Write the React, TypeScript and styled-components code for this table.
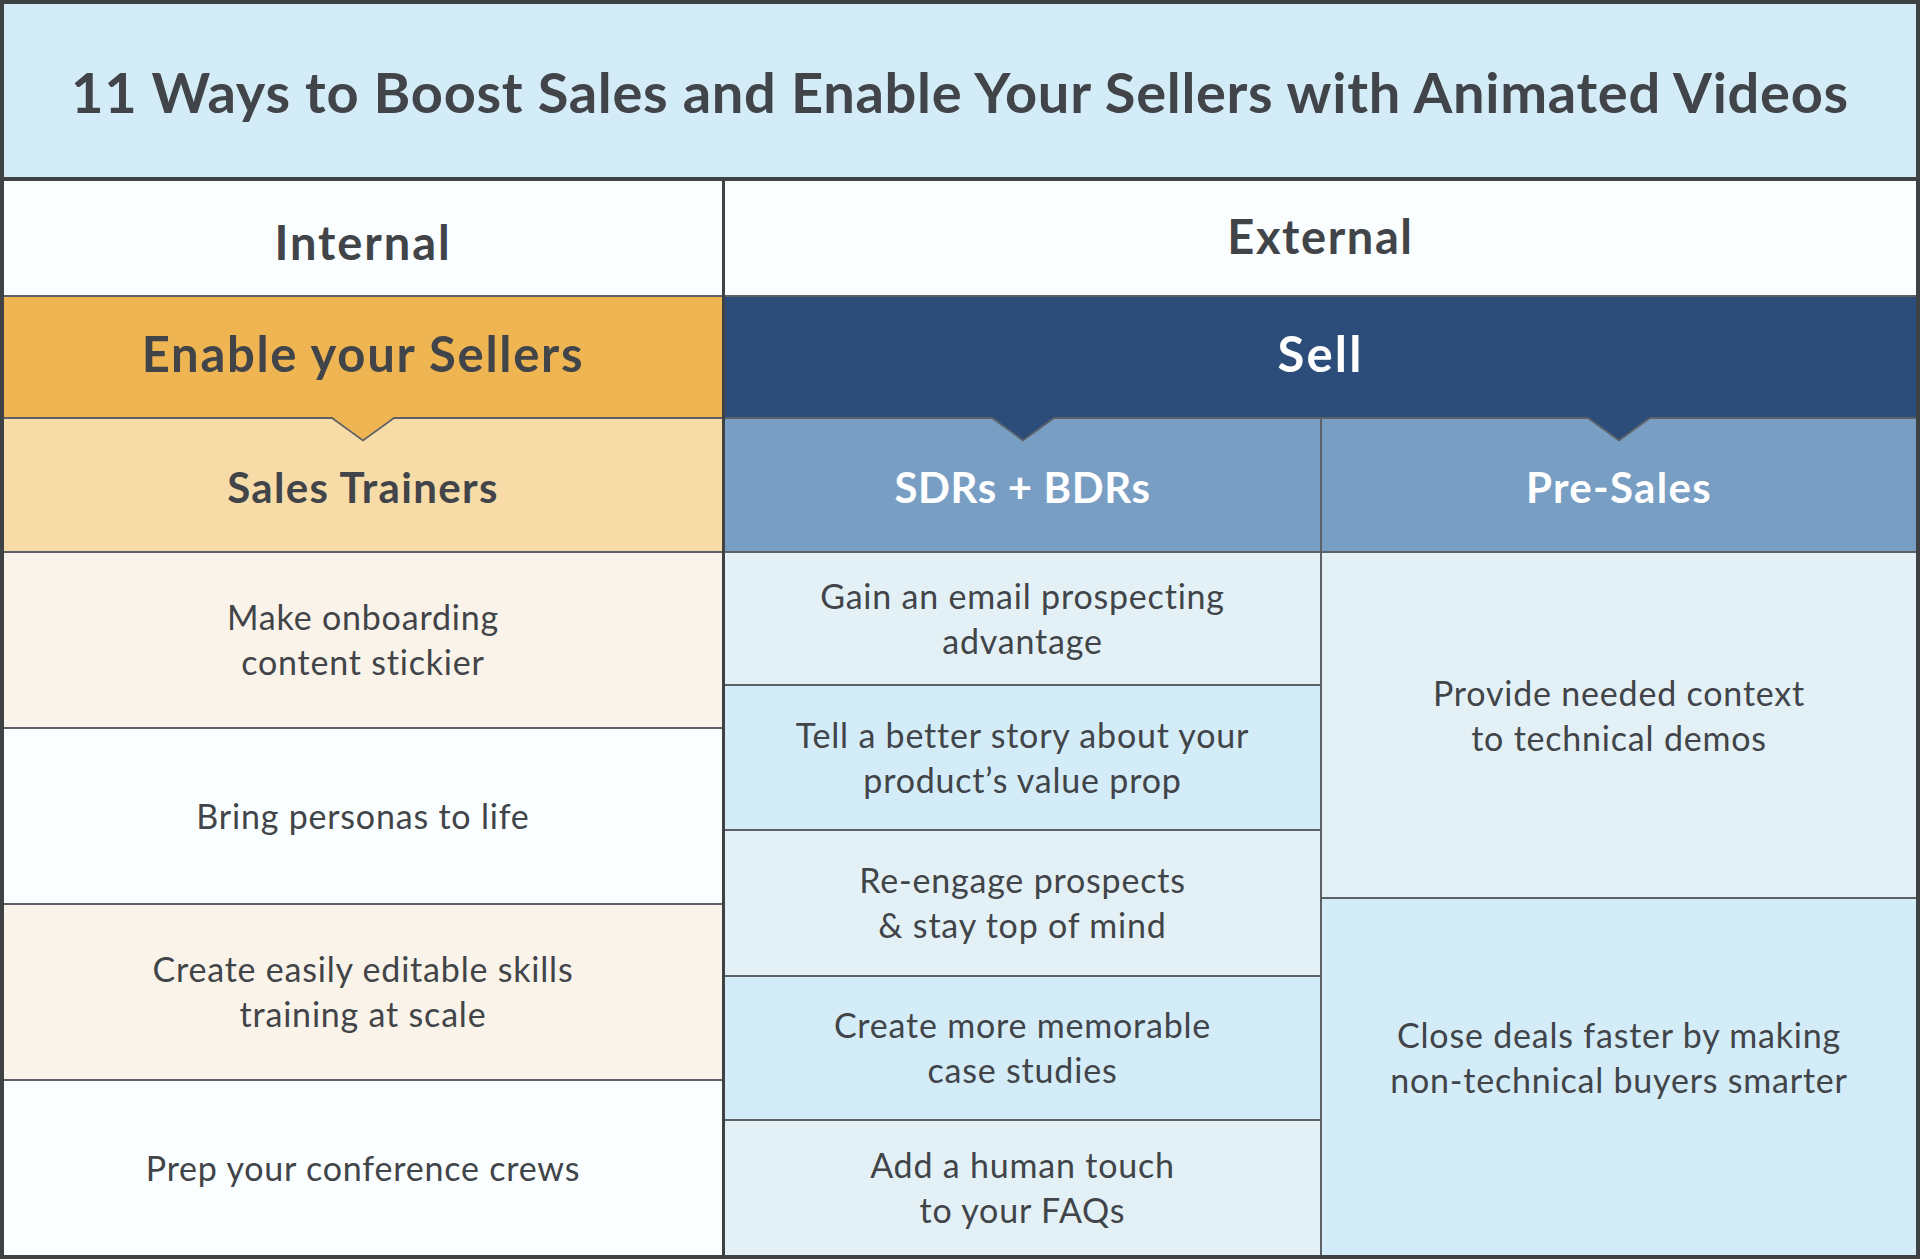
import React from "react";
import styled, { createGlobalStyle } from "styled-components";

const Global = createGlobalStyle`
  html, body { margin: 0; padding: 0; background: #ffffff; }
  body { font-family: Lato, "Open Sans", sans-serif; color: #414448; }
  *, *::before, *::after { box-sizing: border-box; }
`;

const INK = "#414448";
const LINE = "#5d6165";
const FRAME = "#3e4245";

const Frame = styled.div`
  width: 1920px;
  height: 1259px;
  border: 4px solid ${FRAME};
  display: flex;
  flex-direction: column;
  background: #fbfeff;
  overflow: hidden;
`;

const TitleBar = styled.header`
  height: 177px;
  flex: none;
  background: #d3ecf7;
  border-bottom: 4px solid ${FRAME};
  display: flex;
  align-items: center;
  justify-content: center;
  padding-top: 1px;
`;

const Title = styled.h1`
  margin: 0;
  font-size: 56px;
  font-weight: 700;
  color: ${INK};
  letter-spacing: 0.7px;
  white-space: nowrap;
`;

const Body = styled.div`
  flex: 1;
  display: flex;
  min-height: 0;
`;

const Column = styled.section<{ $w?: number; $divider?: number }>`
  display: flex;
  flex-direction: column;
  ${(p) => (p.$w ? `width: ${p.$w}px; flex: none;` : "flex: 1; min-width: 0;")}
  ${(p) => (p.$divider ? `border-right: ${p.$divider}px solid ${p.$divider > 2 ? FRAME : LINE};` : "")}
`;

const SubGrid = styled.div`
  flex: 1;
  display: flex;
  min-height: 0;
`;

const Cell = styled.div<{ $h?: number; $bg: string; $line?: boolean; $pb?: number }>`
  position: relative;
  display: flex;
  align-items: center;
  justify-content: center;
  text-align: center;
  background: ${(p) => p.$bg};
  ${(p) => (p.$h ? `height: ${p.$h}px; flex: none;` : "flex: 1; min-height: 0;")}
  ${(p) => (p.$line ? `border-top: 2px solid ${LINE};` : "")}
  padding-bottom: ${(p) => p.$pb ?? 0}px;
`;

const Heading = styled.h2<{ $size: number; $light?: boolean; $dy?: number; $ls?: number }>`
  margin: 0;
  font-size: ${(p) => p.$size}px;
  font-weight: 700;
  line-height: 1.2;
  letter-spacing: ${(p) => p.$ls ?? 1.5}px;
  color: ${(p) => (p.$light ? "#ffffff" : INK)};
  transform: translateY(${(p) => p.$dy ?? 0}px);
  white-space: nowrap;
`;

const Item = styled.p`
  margin: 0;
  font-size: 34px;
  font-weight: 400;
  line-height: 45px;
  color: ${INK};
  letter-spacing: 0.8px;
  transform: translateY(-1px);
`;

const NotchSvg = styled.svg`
  position: absolute;
  top: -2px;
  left: 50%;
  transform: translateX(-50%);
  width: 62px;
  height: 25px;
  overflow: visible;
`;

const Notch = ({ fill }: { fill: string }) => (
  <NotchSvg viewBox="0 0 62 25">
    <polygon points="0,0 62,0 31,23" fill={fill} />
    <polyline points="0,1 31,23.5 62,1" fill="none" stroke={LINE} strokeWidth="1.6" />
  </NotchSvg>
);

const C = {
  white: "#fbfeff",
  cream: "#faf3e9",
  orange: "#f0b553",
  peach: "#f8dca8",
  navy: "#2c4c7a",
  steel: "#799ec4",
  paleBlue: "#e3f1f7",
  skyBlue: "#d3ecf7",
};

const leftItems = [
  ["Make onboarding", "content stickier"],
  ["Bring personas to life"],
  ["Create easily editable skills", "training at scale"],
  ["Prep your conference crews"],
];

const sdrItems: { lines: string[]; h?: number }[] = [
  { lines: ["Gain an email prospecting", "advantage"], h: 133 },
  { lines: ["Tell a better story about your", "product’s value prop"], h: 145 },
  { lines: ["Re-engage prospects", "& stay top of mind"], h: 146 },
  { lines: ["Create more memorable", "case studies"], h: 144 },
  { lines: ["Add a human touch", "to your FAQs"] },
];

const Lines = ({ lines }: { lines: string[] }) => (
  <Item>
    {lines.map((l, i) => (
      <React.Fragment key={i}>
        {i > 0 && <br />}
        {l}
      </React.Fragment>
    ))}
  </Item>
);

export default function App() {
  return (
    <>
      <Global />
      <Frame>
        <TitleBar>
          <Title>11 Ways to Boost Sales and Enable Your Sellers with Animated Videos</Title>
        </TitleBar>
        <Body>
          <Column $w={721} $divider={3}>
            <Cell $h={114} $bg={C.white}>
              <Heading $size={47} $dy={4} $ls={1.9}>Internal</Heading>
            </Cell>
            <Cell $h={122} $bg={C.orange} $line>
              <Heading $size={49} $dy={-4} $ls={1.7}>Enable your Sellers</Heading>
            </Cell>
            <Cell $h={134} $bg={C.peach} $line>
              <Notch fill={C.orange} />
              <Heading $size={42} $dy={2} $ls={1.35}>Sales Trainers</Heading>
            </Cell>
            {leftItems.map((lines, i) => (
              <Cell key={i} $bg={i % 2 === 0 ? C.cream : C.white} $line>
                <Lines lines={lines} />
              </Cell>
            ))}
          </Column>
          <Column>
            <Cell $h={114} $bg={C.white}>
              <Heading $size={47} $dy={-2} $ls={1.6}>External</Heading>
            </Cell>
            <Cell $h={122} $bg={C.navy} $line>
              <Heading $size={49} $light $dy={-4} $ls={2.2}>Sell</Heading>
            </Cell>
            <SubGrid>
              <Column $w={597} $divider={2}>
                <Cell $h={134} $bg={C.steel} $line>
                  <Notch fill={C.navy} />
                  <Heading $size={42} $light $dy={2} $ls={0.6}>SDRs + BDRs</Heading>
                </Cell>
                {sdrItems.map((it, i) => (
                  <Cell key={i} $h={it.h} $bg={i % 2 === 0 ? C.paleBlue : C.skyBlue} $line>
                    <Lines lines={it.lines} />
                  </Cell>
                ))}
              </Column>
              <Column>
                <Cell $h={134} $bg={C.steel} $line>
                  <Notch fill={C.navy} />
                  <Heading $size={42} $light $dy={2} $ls={1.3}>Pre-Sales</Heading>
                </Cell>
                <Cell $h={346} $bg={C.paleBlue} $line $pb={18}>
                  <Lines lines={["Provide needed context", "to technical demos"]} />
                </Cell>
                <Cell $bg={C.skyBlue} $line $pb={38}>
                  <Lines lines={["Close deals faster by making", "non-technical buyers smarter"]} />
                </Cell>
              </Column>
            </SubGrid>
          </Column>
        </Body>
      </Frame>
    </>
  );
}
